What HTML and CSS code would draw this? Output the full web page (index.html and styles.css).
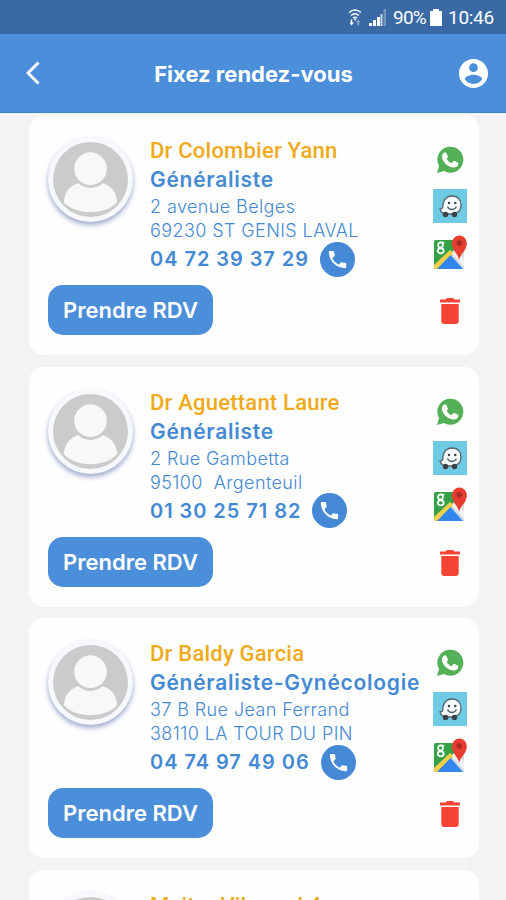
FILE: index.html
```html
<!DOCTYPE html>
<html lang="fr">

<head>
    <meta charset="UTF-8">
    <meta name="viewport" content="width=device-width, initial-scale=1.0">
    <title>Fixez rendez-vous</title>
    <link rel="stylesheet" href="styles.css">
</head>

<body>
    <svg class="sprite">
        <symbol id="avatar" viewBox="0 0 76 76">
            <circle cx="38" cy="38" r="38" fill="#cbcbcb" />
            <path d="M11 61C12 48 20 40 38 40s26 8 27 21c-7 7-16 10-27 10s-20-3-27-10z" fill="#f8f8f8" />
            <circle cx="38" cy="28" r="18.500" fill="#cbcbcb" />
            <circle cx="38" cy="27" r="16.500" fill="#f8f8f8" />
        </symbol>
        <symbol id="phone" viewBox="0 0 24 24">
            <path d="M6.620 10.790c1.440 2.830 3.760 5.140 6.590 6.590l2.200-2.200c.27-.27.67-.36 1.020-.24 1.120.37 2.330.57 3.570.57.55 0 1 .45 1 1V20c0 .55-.45 1-1 1-9.390 0-17-7.610-17-17 0-.55.45-1 1-1h3.500c.55 0 1 .45 1 1 0 1.250.2 2.450.57 3.570.11.35.03.74-.25 1.020l-2.200 2.200z" />
        </symbol>
        <symbol id="whatsapp" viewBox="0 0 28 28">
            <path d="M1 27l2-7A13 13 0 1 1 8 25z" fill="#54b056" />
            <path d="M7.600 7q1-1.100 2.400-.6l2 4q.2 1-1.400 2.300 1.900 3.400 4.900 4.500l1.700-2q.7-.6 1.500-.1l3.300 1.700q.6.600.2 1.700-.9 3-4.300 3C12 21.500 6.200 15.800 5.900 10.700q0-2.300 1.700-3.700z" fill="#fff" />
        </symbol>
        <symbol id="waze" viewBox="0 0 34 34">
            <rect width="34" height="34" fill="#6fcbe3" />
            <path d="M7 20c3 0 3-2 3-5 1-5 4-8 9-8 6 0 9 4 9 9 0 6-4 9-9 9h-6c-3 0-5-2-6-5z" fill="#f5fafb" stroke="#53646c" stroke-width="1.300" />
            <circle cx="12.500" cy="25.500" r="2.700" fill="#3c4145" />
            <circle cx="21.500" cy="25.500" r="2.700" fill="#3c4145" />
            <circle cx="16" cy="14" r="1.200" fill="#3c4145" />
            <circle cx="22.300" cy="14" r="1.200" fill="#3c4145" />
            <path d="M14.500 17.500c1.500 4 7 4 9 0" fill="none" stroke="#53646c" stroke-width="1.300" />
        </symbol>
        <symbol id="maps" viewBox="0 0 34 36">
            <path d="M3 6h28v29H3q-2 0-2-2V8q0-2 2-2z" fill="#d7dce0" />
            <path d="M3 6h19l1 8L2 35q-1-1-1-2V8q0-2 2-2z" fill="#36a047" />
            <path d="M1 31L17 16l4 3L5 35H3q-2 0-2-2z" fill="#f3ce4b" />
            <path d="M4 35l13.500-14L30 35z" fill="#3187ed" />
            <path d="M19 19l4-3 8 9v8z" fill="#eff2f4" />
            <path d="M26 26c-1-7-7-9-7-17a7.400 7.400 0 0 1 14.800 0c0 8-6 10-7.800 17z" fill="#e83c31" />
            <circle cx="26.300" cy="9" r="2.700" fill="#a52b25" />
            <g fill="none" stroke="#fff" stroke-width="1.700">
                <ellipse cx="7.500" cy="11" rx="2.400" ry="2.600" />
                <ellipse cx="7.700" cy="16.800" rx="3" ry="2.500" />
                <path d="M7.500 8.600h3.800" />
            </g>
        </symbol>
        <symbol id="trash" viewBox="0 0 20 26">
            <path d="M0 1.500h5.500L7 0h6l1.500 1.500H20v3H0zM1.300 6h17.400v17q0 3-3 3H4.300q-3 0-3-3z" fill="#f64434" />
        </symbol>
    </svg>

    <div class="status_bar">
        <svg class="wifi" viewBox="0 0 14 18">
            <g fill="none" stroke="#fff" stroke-width="1.300">
                <path d="M1 4.500q6-5 12 0M3 7.500q4-3.500 8 0M5 10q2-1.800 4 0" />
            </g>
            <path d="M7 13L5.500 10.500h3zM4.200 11.500v3H6L3.500 17.500 1.500 14.500h1.300v-3z" fill="#fff" />
            <path d="M9.500 17.500v-3H8l2.200-3 2.300 3H11v3z" fill="#8fabcf" />
        </svg>
        <svg class="signal" viewBox="0 0 17 17">
            <path d="M0 14h3v3H0zM4 11h3v6H4zM8 8h3v9H8z" fill="#fff" />
            <path d="M11.500 5h2v12h-2z" fill="#c5d3e6" />
            <path d="M14.500 0H17v17h-2.500z" fill="#7695bf" />
        </svg>
        <span class="percent">90%</span>
        <svg class="battery" viewBox="0 0 12 17">
            <path d="M3 0h6v2h3v15H0V2h3z" fill="#fff" />
        </svg>
        <span class="clock">10:46</span>
    </div>

    <div class="header">
        <svg class="back" viewBox="0 0 14 24">
            <path d="M12.500 1.500L2 12l10.500 10.500" fill="none" stroke="#fff" stroke-width="3" />
        </svg>
        <h1>Fixez rendez-vous</h1>
        <svg class="account" viewBox="2 2 20 20">
            <path d="M12 2C6.480 2 2 6.480 2 12s4.480 10 10 10 10-4.480 10-10S17.520 2 12 2zm0 3c1.660 0 3 1.340 3 3s-1.340 3-3 3-3-1.340-3-3 1.340-3 3-3zm0 14.200c-2.500 0-4.710-1.280-6-3.220.03-1.990 4-3.080 6-3.080 1.990 0 5.970 1.090 6 3.080-1.290 1.940-3.500 3.220-6 3.220z" fill="#fff" />
        </svg>
    </div>

    <div class="list">
        <div class="card">
            <div class="avatar"><svg><use href="#avatar" /></svg></div>
            <div class="info">
                <h2>Dr Colombier Yann</h2>
                <h3>Généraliste</h3>
                <p>2 avenue Belges</p>
                <p>69230 ST GENIS LAVAL</p>
                <div class="tel">04 72 39 37 29 <span class="call"><svg><use href="#phone" /></svg></span></div>
            </div>
            <div class="actions">
                <svg class="whatsapp"><use href="#whatsapp" /></svg>
                <svg class="waze"><use href="#waze" /></svg>
                <svg class="maps"><use href="#maps" /></svg>
                <svg class="trash"><use href="#trash" /></svg>
            </div>
            <button>Prendre RDV</button>
        </div>

        <div class="card">
            <div class="avatar"><svg><use href="#avatar" /></svg></div>
            <div class="info">
                <h2>Dr Aguettant Laure</h2>
                <h3>Généraliste</h3>
                <p>2 Rue Gambetta</p>
                <p>95100&nbsp; Argenteuil</p>
                <div class="tel">01 30 25 71 82 <span class="call"><svg><use href="#phone" /></svg></span></div>
            </div>
            <div class="actions">
                <svg class="whatsapp"><use href="#whatsapp" /></svg>
                <svg class="waze"><use href="#waze" /></svg>
                <svg class="maps"><use href="#maps" /></svg>
                <svg class="trash"><use href="#trash" /></svg>
            </div>
            <button>Prendre RDV</button>
        </div>

        <div class="card">
            <div class="avatar"><svg><use href="#avatar" /></svg></div>
            <div class="info">
                <h2>Dr Baldy Garcia</h2>
                <h3>Généraliste-Gynécologie</h3>
                <p>37 B Rue Jean Ferrand</p>
                <p>38110 LA TOUR DU PIN</p>
                <div class="tel">04 74 97 49 06 <span class="call"><svg><use href="#phone" /></svg></span></div>
            </div>
            <div class="actions">
                <svg class="whatsapp"><use href="#whatsapp" /></svg>
                <svg class="waze"><use href="#waze" /></svg>
                <svg class="maps"><use href="#maps" /></svg>
                <svg class="trash"><use href="#trash" /></svg>
            </div>
            <button>Prendre RDV</button>
        </div>

        <div class="card">
            <div class="avatar"><svg><use href="#avatar" /></svg></div>
            <div class="info">
                <h2>Maitre Vibenod 4</h2>
            </div>
            <div class="actions">
                <svg class="whatsapp"><use href="#whatsapp" /></svg>
            </div>
        </div>
    </div>
</body>

</html>
```
FILE: styles.css
```css
* {
    margin: 0;
    padding: 0;
    box-sizing: border-box;
}

body {
    height: 900px;
    overflow: hidden;
    background-color: #f3f3f3;
    font-family: Inter, "Liberation Sans", sans-serif;
    color: #4489d4;
}

svg {
    display: block;
}

.sprite {
    display: none;
}

.status_bar {
    height: 34px;
    padding-right: 12px;
    display: flex;
    align-items: center;
    justify-content: flex-end;
    background-color: #3a6aa5;
    color: #fff;
    font-family: Roboto, sans-serif;
    font-size: 19px;
}

.wifi {
    width: 14px;
    height: 18px;
    margin-right: 7px;
}

.signal {
    width: 17px;
    height: 17px;
    margin-right: 7px;
}

.percent {
    width: 34px;
    margin-right: 3px;
    letter-spacing: -0.8px;
}

.battery {
    width: 12px;
    height: 17px;
    margin-right: 6px;
}

.clock {
    width: 46px;
    letter-spacing: -0.3px;
}

.header {
    height: 79px;
    padding: 0 18px 0 26px;
    display: flex;
    align-items: center;
    background-color: #4b8ed9;
    border-bottom: 1px solid #3c82d2;
}

.header h1 {
    flex: 1;
    padding: 2px 0 0 8px;
    color: #fff;
    font-size: 22px;
    font-weight: 700;
    text-align: center;
    white-space: nowrap;
}

.back {
    width: 14px;
    height: 24px;
}

.account {
    width: 29px;
    height: 29px;
}

.list {
    height: 787px;
    padding: 2px 27px 0 29px;
    overflow: hidden;
}

.card {
    height: 240px;
    margin-bottom: 11.7px;
    padding: 22px 12px 0 19px;
    display: grid;
    grid-template-columns: 102px 1fr 34px;
    grid-template-rows: 148px 50px;
    background-color: #fefefe;
    border-radius: 15px;
}

.avatar {
    width: 85px;
    height: 85px;
    padding: 5px;
    border-radius: 50%;
    background-color: #f6f8fb;
    box-shadow: 0 3px 5px rgba(75, 100, 165, 0.55);
}

.avatar svg {
    width: 75px;
    height: 75px;
}

.info {
    white-space: nowrap;
}

.info h2 {
    height: 27px;
    font-family: Roboto, sans-serif;
    font-size: 22px;
    font-weight: 500;
    line-height: 27px;
    letter-spacing: 0.22px;
    color: #eeaa1b;
}

.info h3 {
    height: 31px;
    font-size: 21px;
    font-weight: 600;
    line-height: 32px;
    letter-spacing: 0.73px;
}

.info p {
    height: 24px;
    font-size: 18px;
    font-weight: 300;
    line-height: 24px;
    letter-spacing: 0.4px;
}

.tel {
    height: 32px;
    display: flex;
    align-items: center;
    font-size: 20px;
    font-weight: 600;
    letter-spacing: 0.95px;
}

.call {
    width: 35px;
    height: 35px;
    margin-left: 11px;
    padding: 6px;
    border-radius: 50%;
    background-color: #4589d6;
}

.call svg {
    width: 23px;
    height: 23px;
    fill: #fff;
}

.actions {
    grid-row: 1 / 3;
    grid-column: 3;
    display: flex;
    flex-direction: column;
    align-items: center;
}

.whatsapp {
    width: 28px;
    height: 28px;
    margin-top: 9px;
}

.waze {
    width: 34px;
    height: 34px;
    margin-top: 15px;
}

.maps {
    width: 34px;
    height: 36px;
    margin-top: 11px;
}

.trash {
    width: 20px;
    height: 26px;
    margin-top: 28px;
}

button {
    grid-column: 1 / 3;
    width: 165px;
    height: 50px;
    border: none;
    border-radius: 15px;
    background-color: #4b8ed9;
    color: #fff;
    font-family: Inter, sans-serif;
    font-size: 22px;
    font-weight: 600;
    white-space: nowrap;
}
```
